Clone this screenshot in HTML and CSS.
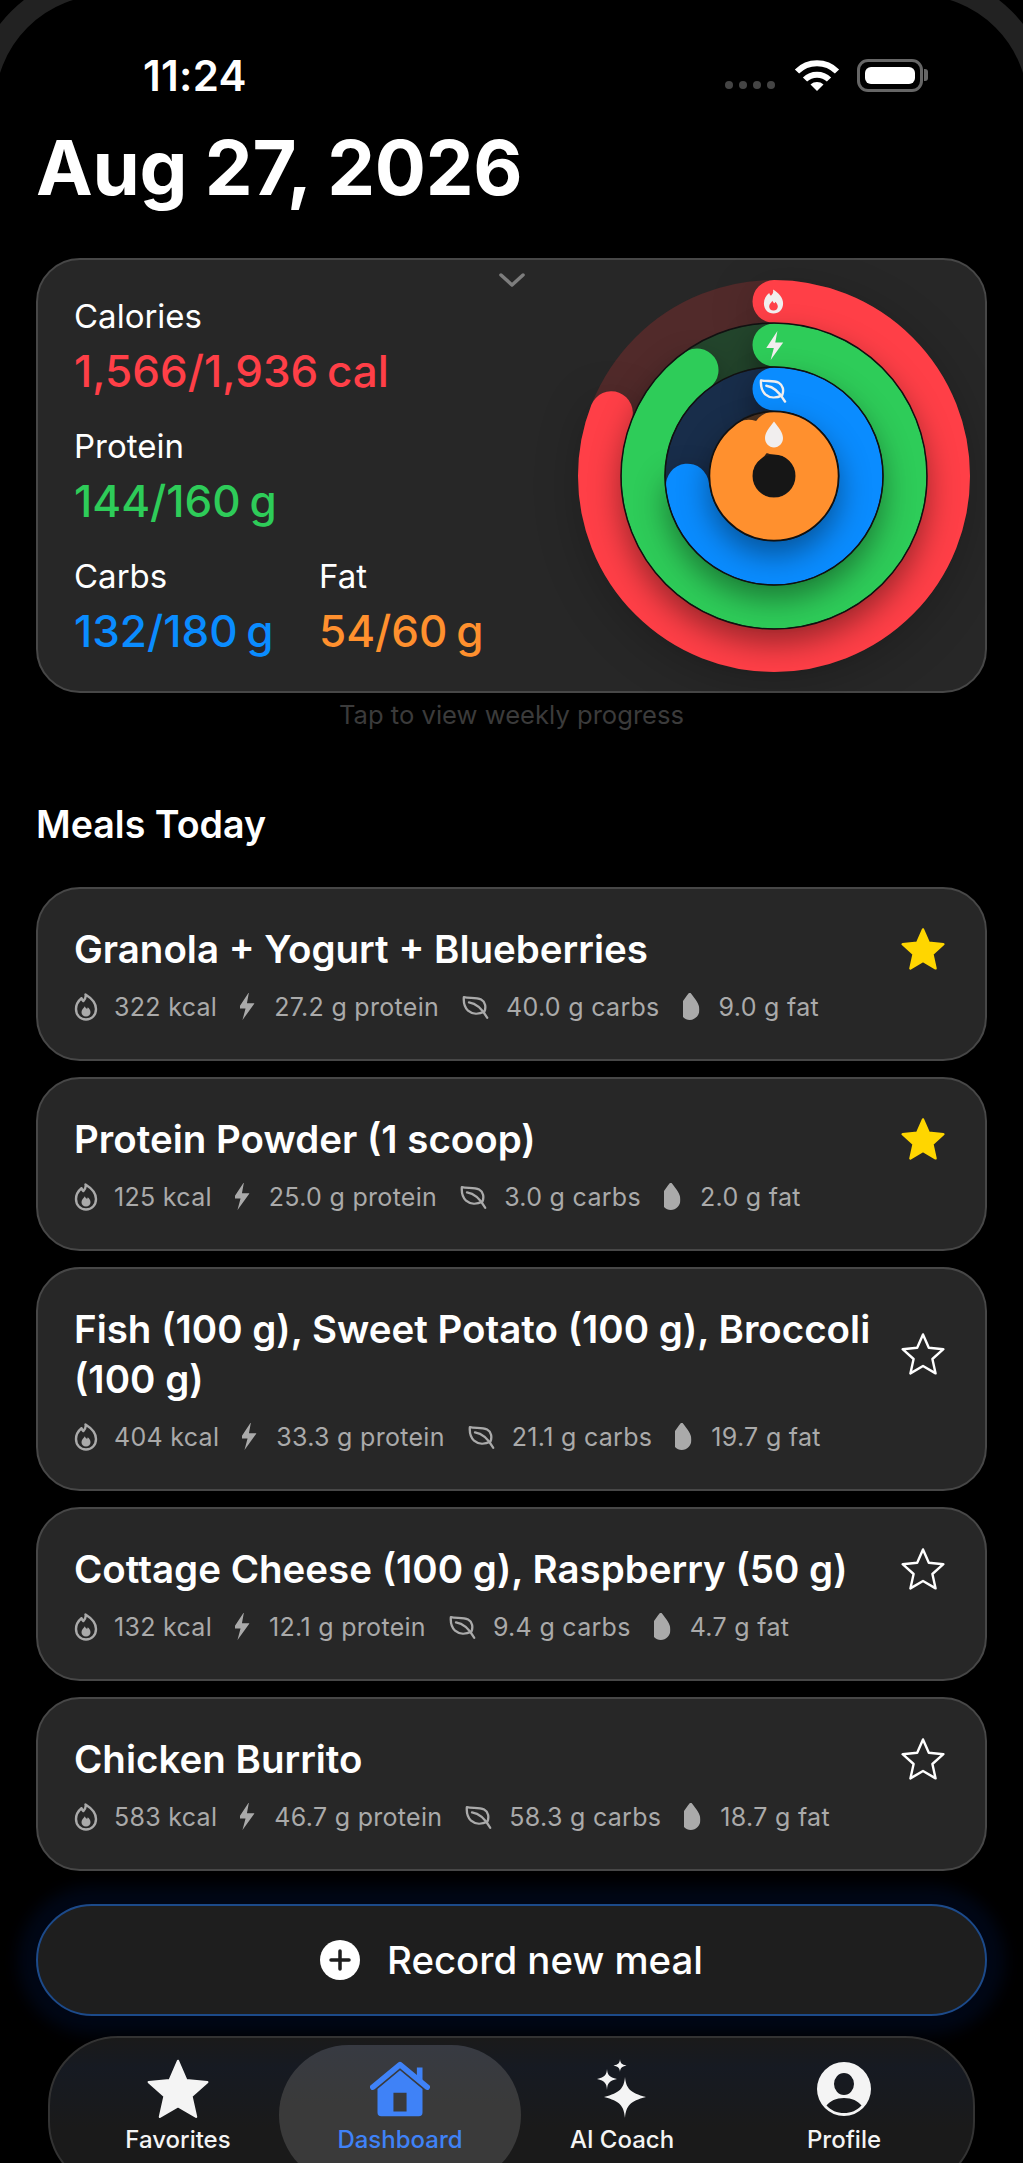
FILE: index.html
```html
<!DOCTYPE html>
<html lang="en">
<head>
  <meta charset="UTF-8" />
  <meta name="viewport" content="width=device-width, initial-scale=1.0"/>
  <title>Dashboard</title>
  <link rel="stylesheet" href="styles.css">
</head>
<body>
  <!-- shared icons -->
  <svg class="icon-defs" width="0" height="0">
    <symbol id="i-flame" viewBox="0 0 24 28">
      <path class="flame-body" d="M11.5 1.5c.8 3.2-.6 5-2.2 6.600C8.300 7.200 7.800 6.200 7.500 5.200 4.200 7.900 2 11.500 2 16c0 6 4.200 10.500 10 10.500S22 22 22 16c0-6-4.800-11-10.500-14.500z"/>
      <path class="flame-core" d="M12 23.500c-2.700 0-4.500-1.900-4.500-4.300 0-2.500 2-3.900 3.400-6 .5 1.400 1.100 2.200 2.300 2.600.3-.5.500-1 .5-1.600 1.700 1.400 2.800 3.100 2.800 5 0 2.400-1.800 4.300-4.500 4.300z"/>
    </symbol>
    <symbol id="i-bolt" viewBox="3 1 18 30">
      <path d="M15 1 3.500 18.500h7.800L8 31l13-18h-8.200z"/>
    </symbol>
    <symbol id="i-leaf" viewBox="0 0 30 26">
      <path class="leaf" d="M2 2.500c6 1.500 13-.5 18.500 2.500 4.500 2.500 5.500 8 3.500 13-6 3-13 3-17.500-1C3 13.500 1.500 8 2 2.500z"/>
      <path class="leaf" d="M7.500 8c6 .8 12.500 4 19.500 16.500"/>
    </symbol>
    <symbol id="i-drop" viewBox="3 1 18 26">
      <path d="M12 1c4.800 6.200 9 11 9 16.500C21 22.700 17 27 12 27s-9-4.300-9-9.500C3 12 7.200 7.200 12 1z"/>
    </symbol>
    <symbol id="i-star" viewBox="0 0 24 24">
      <polygon class="star-shape" points="12,2.200 14.900,8.900 22.200,9.600 16.700,14.500 18.300,21.700 12,18 5.700,21.700 7.300,14.500 1.800,9.600 9.100,8.900"/>
    </symbol>
  </svg>

  <div class="frame-clip"><div class="device-frame"></div></div>

  <header class="status-bar">
    <span class="status-time">11:24</span>
    <div class="status-icons">
      <div class="signal"><i></i><i></i><i></i><i></i></div>
      <svg class="wifi" viewBox="0 0 46 32" width="46" height="32">
        <path d="M3 12.500C14 1.500 32 1.500 43 12.500" />
        <path d="M11 20.500C17.500 14 28.500 14 35 20.500" />
        <path class="wifi-dot" d="M16.500 25.500c3.600-3.300 9.400-3.300 13 0L23 32z" />
      </svg>
      <div class="battery"><div class="battery-fill"></div></div>
    </div>
  </header>

  <main class="content">
    <h1 class="date-title">Aug 27, 2026</h1>

    <section class="summary-card">
      <svg class="chevron" viewBox="0 0 28 16" width="28" height="16"><path d="M3 3l11 10L25 3"/></svg>
      <div class="stats">
        <div class="stat stat-wide">
          <div class="stat-label">Calories</div>
          <div class="stat-value red">1,566/1,936 cal</div>
        </div>
        <div class="stat stat-wide">
          <div class="stat-label">Protein</div>
          <div class="stat-value green">144/160 g</div>
        </div>
        <div class="stat">
          <div class="stat-label">Carbs</div>
          <div class="stat-value blue">132/180 g</div>
        </div>
        <div class="stat">
          <div class="stat-label">Fat</div>
          <div class="stat-value orange">54/60 g</div>
        </div>
      </div>

      <svg class="rings" viewBox="0 0 392 392" width="392" height="392">
        <circle class="track track-red" cx="196" cy="196" r="174.500"/>
        <g class="ring-shadow ring-shadow-outer"><circle class="bar bar-red" cx="196" cy="196" r="174.500" pathLength="100" stroke-dasharray="80.9 100" transform="rotate(-90 196 196)"/></g>
        <circle class="track track-green" cx="196" cy="196" r="131"/>
        <g class="ring-shadow"><circle class="bar bar-green" cx="196" cy="196" r="131" pathLength="100" stroke-dasharray="90 100" transform="rotate(-90 196 196)"/></g>
        <circle class="track track-blue" cx="196" cy="196" r="87"/>
        <g class="ring-shadow"><circle class="bar bar-blue" cx="196" cy="196" r="87" pathLength="100" stroke-dasharray="73.3 100" transform="rotate(-90 196 196)"/></g>
        <circle class="track track-orange" cx="196" cy="196" r="43"/>
        <g class="ring-shadow"><circle class="bar bar-orange" cx="196" cy="196" r="43" pathLength="100" stroke-dasharray="90 100" transform="rotate(-90 196 196)"/></g>
        <circle class="ring-line" cx="196" cy="196" r="153"/>
        <circle class="ring-line" cx="196" cy="196" r="109"/>
        <circle class="ring-line" cx="196" cy="196" r="64.500"/>
        <circle class="ring-hole" cx="196" cy="196" r="21"/>
        <use href="#i-flame" class="ring-icon on-red" x="184" y="7" width="23" height="29"/>
        <use href="#i-bolt" class="ring-icon" x="187" y="51" width="19" height="29"/>
        <use href="#i-leaf" class="ring-icon" x="181" y="98" width="29" height="25"/>
        <use href="#i-drop" class="ring-icon" x="187" y="141" width="18" height="27"/>
      </svg>
    </section>
    <p class="hint">Tap to view weekly progress</p>

    <h2 class="section-title">Meals Today</h2>

    <div class="meal-list">
      <article class="meal-card">
        <div class="meal-top">
          <h3 class="meal-name">Granola + Yogurt + Blueberries</h3>
          <svg class="fav fav-on" viewBox="0 0 24 24"><use href="#i-star"/></svg>
        </div>
        <div class="meal-meta">
          <span class="meta-item"><svg class="m-icon m-flame" viewBox="0 0 24 28"><use href="#i-flame"/></svg>322 kcal</span>
          <span class="meta-item"><svg class="m-icon m-bolt" viewBox="3 1 18 30"><use href="#i-bolt"/></svg>27.2 g protein</span>
          <span class="meta-item"><svg class="m-icon m-leaf" viewBox="0 0 30 26"><use href="#i-leaf"/></svg>40.0 g carbs</span>
          <span class="meta-item"><svg class="m-icon m-drop" viewBox="3 1 18 26"><use href="#i-drop"/></svg>9.0 g fat</span>
        </div>
      </article>

      <article class="meal-card">
        <div class="meal-top">
          <h3 class="meal-name">Protein Powder (1 scoop)</h3>
          <svg class="fav fav-on" viewBox="0 0 24 24"><use href="#i-star"/></svg>
        </div>
        <div class="meal-meta">
          <span class="meta-item"><svg class="m-icon m-flame" viewBox="0 0 24 28"><use href="#i-flame"/></svg>125 kcal</span>
          <span class="meta-item"><svg class="m-icon m-bolt" viewBox="3 1 18 30"><use href="#i-bolt"/></svg>25.0 g protein</span>
          <span class="meta-item"><svg class="m-icon m-leaf" viewBox="0 0 30 26"><use href="#i-leaf"/></svg>3.0 g carbs</span>
          <span class="meta-item"><svg class="m-icon m-drop" viewBox="3 1 18 26"><use href="#i-drop"/></svg>2.0 g fat</span>
        </div>
      </article>

      <article class="meal-card">
        <div class="meal-top">
          <h3 class="meal-name">Fish (100 g), Sweet Potato (100 g), Broccoli (100 g)</h3>
          <svg class="fav" viewBox="0 0 24 24"><use href="#i-star"/></svg>
        </div>
        <div class="meal-meta">
          <span class="meta-item"><svg class="m-icon m-flame" viewBox="0 0 24 28"><use href="#i-flame"/></svg>404 kcal</span>
          <span class="meta-item"><svg class="m-icon m-bolt" viewBox="3 1 18 30"><use href="#i-bolt"/></svg>33.3 g protein</span>
          <span class="meta-item"><svg class="m-icon m-leaf" viewBox="0 0 30 26"><use href="#i-leaf"/></svg>21.1 g carbs</span>
          <span class="meta-item"><svg class="m-icon m-drop" viewBox="3 1 18 26"><use href="#i-drop"/></svg>19.7 g fat</span>
        </div>
      </article>

      <article class="meal-card">
        <div class="meal-top">
          <h3 class="meal-name">Cottage Cheese (100 g), Raspberry (50 g)</h3>
          <svg class="fav" viewBox="0 0 24 24"><use href="#i-star"/></svg>
        </div>
        <div class="meal-meta">
          <span class="meta-item"><svg class="m-icon m-flame" viewBox="0 0 24 28"><use href="#i-flame"/></svg>132 kcal</span>
          <span class="meta-item"><svg class="m-icon m-bolt" viewBox="3 1 18 30"><use href="#i-bolt"/></svg>12.1 g protein</span>
          <span class="meta-item"><svg class="m-icon m-leaf" viewBox="0 0 30 26"><use href="#i-leaf"/></svg>9.4 g carbs</span>
          <span class="meta-item"><svg class="m-icon m-drop" viewBox="3 1 18 26"><use href="#i-drop"/></svg>4.7 g fat</span>
        </div>
      </article>

      <article class="meal-card">
        <div class="meal-top">
          <h3 class="meal-name">Chicken Burrito</h3>
          <svg class="fav" viewBox="0 0 24 24"><use href="#i-star"/></svg>
        </div>
        <div class="meal-meta">
          <span class="meta-item"><svg class="m-icon m-flame" viewBox="0 0 24 28"><use href="#i-flame"/></svg>583 kcal</span>
          <span class="meta-item"><svg class="m-icon m-bolt" viewBox="3 1 18 30"><use href="#i-bolt"/></svg>46.7 g protein</span>
          <span class="meta-item"><svg class="m-icon m-leaf" viewBox="0 0 30 26"><use href="#i-leaf"/></svg>58.3 g carbs</span>
          <span class="meta-item"><svg class="m-icon m-drop" viewBox="3 1 18 26"><use href="#i-drop"/></svg>18.7 g fat</span>
        </div>
      </article>
    </div>

    <button class="record-btn">
      <svg viewBox="0 0 40 40" width="40" height="40"><circle cx="20" cy="20" r="20" fill="#fff"/><path d="M20 11v18M11 20h18" stroke="#1e1e1e" stroke-width="3.500" stroke-linecap="round"/></svg>
      Record new meal
    </button>
  </main>

  <div class="nav-clip">
    <nav class="bottom-nav">
      <a class="nav-item">
        <svg class="nav-icon nav-star" viewBox="1.2 1.6 21.6 20.8"><use href="#i-star" width="24" height="24"/></svg>
        <span>Favorites</span>
      </a>
      <a class="nav-item active">
        <svg class="nav-icon" viewBox="0 0 64 60">
          <path d="M50 7h6v14l-6-5z"/>
          <path class="house-roof" d="M3 28 32 4l29 24"/>
          <path fill-rule="evenodd" d="M32 10 56 30v25a4 4 0 0 1-4 4H12a4 4 0 0 1-4-4V30zM25 34v20h14V34z"/>
        </svg>
        <span>Dashboard</span>
      </a>
      <a class="nav-item">
        <svg class="nav-icon" viewBox="0 0 50 60">
          <path d="M28 18c1 11 5 16 21 20-16 4-20 9-21 21-1-12-5-17-21-21 16-4 20-9 21-20z"/>
          <path d="M10 10c.5 6 2 8 10 10-8 2-9.500 4-10 11-.5-7-2-9-10-11 8-2 9.500-4 10-10z"/>
          <path d="M23 0c.3 4 1.500 5.500 6.500 6.500-5 1-6.200 2.500-6.500 6.500-.3-4-1.500-5.500-6.500-6.500 5-1 6.200-2.500 6.500-6.500z"/>
        </svg>
        <span>AI Coach</span>
      </a>
      <a class="nav-item">
        <svg class="nav-icon nav-profile" viewBox="0 0 54 54">
          <path fill-rule="evenodd" d="M27 0a27 27 0 1 1 0 54 27 27 0 0 1 0-54zM27 11a10 11 0 1 0 0 22 10 11 0 0 0 0-22zM27 36c-8 0-14 3-17.500 7.500C14 48.500 20 51 27 51s13-2.500 17.500-7.500C41 39 35 36 27 36z"/>
        </svg>
        <span>Profile</span>
      </a>
    </nav>
  </div>
</body>
</html>
```

FILE: styles.css
```css
* {
  box-sizing: border-box;
}

html {
  height: 100%;
  overflow: hidden;
}

body {
  position: relative;
  margin: 0;
  width: 1023px;
  height: 2163px;
  overflow: hidden;
  background: #000;
  color: #fff;
  font-family: Inter, "Liberation Sans", sans-serif;
}

.icon-defs {
  position: absolute;
}

/* phone body, only the corners show at the top */
.frame-clip {
  position: absolute;
  top: 0;
  left: 0;
  width: 1023px;
  height: 140px;
  overflow: hidden;
  pointer-events: none;
}

.device-frame {
  position: absolute;
  top: -28px;
  left: -28px;
  width: 1079px;
  height: 400px;
  border: 23px solid #222;
  border-radius: 134px;
}

.status-bar {
  display: flex;
  align-items: center;
  justify-content: space-between;
  height: 54px;
  margin-top: 48px;
  padding: 0 100px 0 143px;
}

.status-time {
  font-size: 42px;
  font-weight: 600;
  letter-spacing: 0.3px;
}

.status-icons {
  display: flex;
  align-items: center;
  gap: 17px;
}

.signal {
  display: flex;
  gap: 6px;
  margin-top: 20px;
  margin-right: 2px;
}

.signal i {
  width: 8px;
  height: 8px;
  border-radius: 50%;
  background: #444;
}

.wifi path {
  fill: none;
  stroke: #fff;
  stroke-width: 6;
}

.wifi .wifi-dot {
  fill: #fff;
  stroke: none;
}

.battery {
  position: relative;
  width: 66px;
  height: 33px;
  padding: 5px;
  border: 3px solid #666;
  border-radius: 11px;
}

.battery::after {
  content: "";
  position: absolute;
  top: 7px;
  right: -8px;
  width: 4px;
  height: 12px;
  border-radius: 0 3px 3px 0;
  background: #666;
}

.battery-fill {
  height: 100%;
  border-radius: 6px;
  background: #fff;
}

.content {
  padding: 0 36px;
}

.date-title {
  margin: 19px 0 0;
  font-size: 76px;
  line-height: 92px;
  font-weight: 700;
  letter-spacing: -0.3px;
}

.summary-card {
  position: relative;
  display: flex;
  align-items: center;
  justify-content: space-between;
  height: 435px;
  margin-top: 45px;
  padding: 0 15px 0 36px;
  background: #272727;
  border: 2px solid #474747;
  border-radius: 44px;
}

.chevron {
  position: absolute;
  top: 12px;
  left: 460px;
}

.chevron path {
  fill: none;
  stroke: #7d7d7d;
  stroke-width: 3.500;
  stroke-linecap: round;
  stroke-linejoin: round;
}

.stats {
  display: grid;
  grid-template-columns: 245px auto;
  row-gap: 32px;
}

.stat-wide {
  grid-column: 1 / -1;
}

.stat-label {
  font-size: 33px;
  line-height: 38px;
  padding-bottom: 2px;
}

.stat-value {
  margin-top: 10px;
  font-size: 44px;
  line-height: 48px;
  font-weight: 500;
  word-spacing: -3px;
}

.red { color: #ff3f47; }
.green { color: #2ecc59; }
.blue { color: #0a8cff; }
.orange { color: #ff902e; }

.rings {
  overflow: visible;
}

.rings circle {
  fill: none;
}

.track {
  stroke-width: 43;
}

.track-red { stroke: #512a2a; }
.track-green { stroke: #23452c; }
.track-blue { stroke: #182d4a; }
.track-orange { stroke: #4d3320; }

.bar {
  stroke-width: 43;
  stroke-linecap: round;
}

/* on a wrapper, the rotate on the circle would turn the shadow too */
.ring-shadow {
  filter: drop-shadow(0 14px 16px rgba(0, 0, 0, 0.42));
}

.ring-shadow-outer {
  filter: drop-shadow(0 10px 22px rgba(0, 0, 0, 0.22));
}

.bar-red { stroke: #ff3f47; }
.bar-green { stroke: #2ecc59; }
.bar-blue { stroke: #0a8cff; }
.bar-orange { stroke: #ff902e; }

.rings .ring-line {
  stroke: #111;
  stroke-width: 1.500;
}

.rings .ring-hole {
  fill: #161616;
}

.ring-icon {
  fill: #f1eeee;
  color: #f1eeee;
}

.on-red {
  --flame-core: #ff3f47;
}

.flame-body {
  fill: var(--flame-fill, currentColor);
  stroke: var(--flame-stroke, none);
  stroke-width: 2.400;
  stroke-linejoin: round;
}

.flame-core {
  fill: var(--flame-core, #aaa);
}

.leaf {
  fill: none;
  stroke: currentColor;
  stroke-width: 2.500;
  stroke-linecap: round;
  stroke-linejoin: round;
}

.hint {
  margin: 7px 0 0;
  text-align: center;
  font-size: 25.600px;
  line-height: 30px;
  color: #3b3b3b;
}

.section-title {
  margin: 73px 0 0;
  font-size: 37.600px;
  line-height: 44px;
  font-weight: 600;
}

.meal-list {
  display: flex;
  flex-direction: column;
  gap: 16px;
  margin-top: 40px;
}

.meal-card {
  padding: 35px 38px 37px 36px;
  background: #272727;
  border: 2px solid #474747;
  border-radius: 44px;
}

.meal-top {
  display: flex;
  align-items: center;
  justify-content: space-between;
  gap: 16px;
}

.meal-name {
  margin: 0;
  font-size: 38.500px;
  line-height: 50px;
  font-weight: 600;
}

.star-shape {
  fill: var(--star-fill, currentColor);
  stroke: var(--star-stroke, currentColor);
  stroke-width: var(--star-width, 0.8);
  stroke-linejoin: round;
}

.fav {
  flex: none;
  width: 48px;
  height: 48px;
  color: #fff;
  --star-fill: none;
  --star-width: 1.2;
}

.fav-on {
  color: #ffd600;
  --star-fill: #ffd600;
}

.meal-meta {
  display: flex;
  gap: 23px;
  margin-top: 18px;
  font-size: 25px;
  line-height: 30px;
  letter-spacing: 0.3px;
  color: #aaa;
}

.meta-item {
  display: flex;
  align-items: center;
  gap: 16px;
}

.m-icon {
  flex: none;
  width: 24px;
  height: 28px;
  fill: #aaa;
  color: #aaa;
}

.m-flame {
  --flame-fill: none;
  --flame-stroke: #aaa;
}

.m-bolt {
  width: 18px;
}

.m-leaf {
  width: 28px;
}

.m-drop {
  width: 20px;
}

.record-btn {
  display: flex;
  align-items: center;
  justify-content: center;
  gap: 27px;
  width: 100%;
  height: 112px;
  margin-top: 33px;
  background: #1e1e1e;
  border: 2px solid #1c4a8a;
  border-radius: 56px;
  color: #fff;
  font-family: inherit;
  font-size: 38.400px;
  font-weight: 500;
  box-shadow: 0 0 16px 18px rgba(0, 30, 90, 0.24);
}

/* nav runs off the bottom of the screen */
.nav-clip {
  position: relative;
  height: 128px;
  margin-top: 20px;
  overflow: hidden;
}

.bottom-nav {
  display: grid;
  grid-template-columns: repeat(4, 222px);
  margin: 0 48px;
  padding: 7px 0 0 17px;
  height: 155px;
  background: linear-gradient(#1a1a1a, #161a22 30px, #1a1a1a 90px);
  border: 2px solid #333;
  border-radius: 70px;
}

.nav-item {
  display: flex;
  flex-direction: column;
  align-items: center;
  height: 140px;
  padding-top: 14px;
  font-size: 24px;
  font-weight: 450;
  color: #f4f4f4;
}

.nav-item.active {
  margin: 0 -10px;
  background: linear-gradient(#373a42, #3a3a3a 60px);
  border-radius: 70px;
  color: #3f82f7;
}

.nav-icon {
  width: 60px;
  height: 60px;
  fill: currentColor;
}

.nav-star {
  width: 62px;
}

.nav-profile {
  width: 54px;
  height: 54px;
  margin: 3px 0;
}

.house-roof {
  fill: none;
  stroke: currentColor;
  stroke-width: 6;
  stroke-linecap: round;
  stroke-linejoin: round;
}

.nav-item span {
  margin-top: 6px;
  line-height: 30px;
}
```
